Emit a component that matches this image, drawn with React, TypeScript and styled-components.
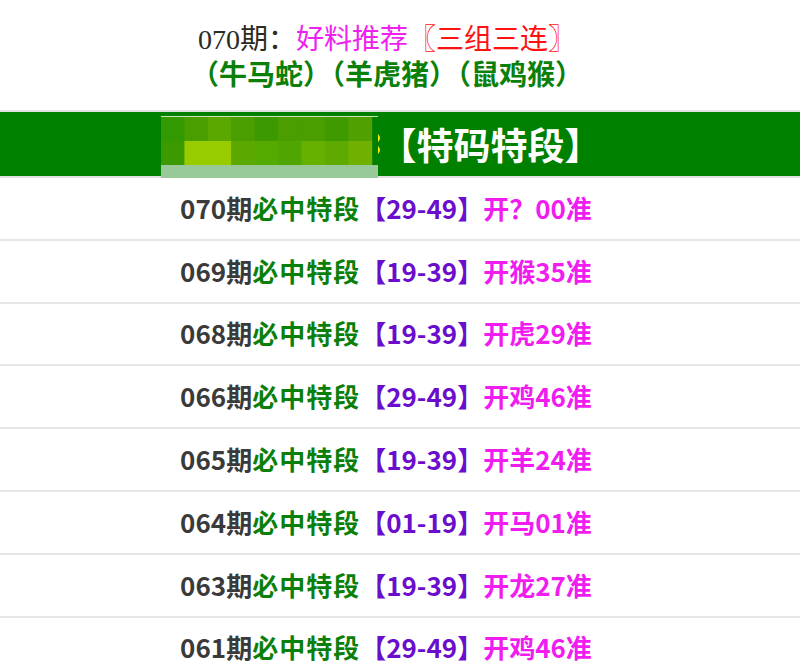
import React from "react";
import styled, { createGlobalStyle } from "styled-components";

const Global = createGlobalStyle`
  html, body { margin: 0; padding: 0; background: #fff; }
  body { font-family: "Noto Sans CJK SC", sans-serif; }
`;

const Page = styled.div`
  width: 800px;
  background: #fff;
`;

const Header = styled.div`
  height: 110px;
  display: flex;
  flex-direction: column;
  align-items: center;
  padding-top: 23px;
  padding-right: 26px;
  box-sizing: border-box;
`;

const TitleLine = styled.div`
  font-family: "Liberation Serif", "Noto Sans CJK SC", serif;
  font-size: 28px;
  line-height: 34px;
  color: #2b2b1f;
  white-space: nowrap;
`;

const Span = styled.span<{ $c: string }>`
  color: ${(p) => p.$c};
`;

const ZodiacLine = styled.div`
  font-family: "Noto Sans CJK SC", sans-serif;
  font-weight: 700;
  font-size: 28px;
  line-height: 33px;
  color: #0a800a;
  white-space: nowrap;
`;

const Banner = styled.div`
  height: 64px;
  background: #008000;
  border-top: 2px solid #e2e2e2;
  border-bottom: 2px solid #e2e2e2;
  display: flex;
  align-items: center;
  justify-content: center;
  padding-right: 38px;
`;

const Mosaic = styled.svg`
  display: block;
  align-self: flex-end;
  margin-bottom: -2px;
  flex-shrink: 0;
`;

const BannerText = styled.div`
  font-family: "Noto Sans CJK SC", sans-serif;
  font-weight: 700;
  font-size: 37px;
  color: #fff;
  white-space: nowrap;
`;

const Row = styled.div`
  height: 58.8px;
  padding-bottom: 2px;
  border-bottom: 2px solid #e6e6e6;
  display: flex;
  align-items: center;
  justify-content: center;
  font-family: "Noto Sans CJK SC", sans-serif;
  font-weight: 700;
  font-size: 26px;
  white-space: nowrap;
  padding-right: 28px;
`;

const Issue = styled.span`
  color: #3a3a3a;
`;

const Must = styled.span`
  color: #0a800a;
  letter-spacing: 1px;
`;

const Range = styled.span`
  color: #6a0dcc;
`;

const Result = styled.span`
  color: #f01cf0;
`;

const row1 = ["#339900", "#4a9e00", "#5aa800", "#4a9e00", "#3d9900", "#4a9e00", "#4a9e00", "#3f9a00", "#4fa000"];
const row2 = ["#3d9900", "#99cc00", "#99cc00", "#5aa800", "#55aa00", "#50a500", "#66b000", "#5eaa00", "#70b000"];

const MosaicImg = () => (
  <Mosaic width="219" height="62" viewBox="0 0 219 62">
    <rect x="0" y="0" width="217" height="1" fill="#c8e6b4" />
    {row1.map((c, i) => (
      <rect key={"a" + i} x={i * 23.4} y={1} width={24} height={24} fill={c} />
    ))}
    {row2.map((c, i) => (
      <rect key={"b" + i} x={i * 23.4} y={25} width={24} height={24} fill={c} />
    ))}
    <rect x="0" y="49" width="217" height="13" fill="#99c999" />
    <path d="M217 18 q4 4 0 8 z" fill="#ffee00" />
    <path d="M217 30 q4 4 0 8 z" fill="#ffee00" />
  </Mosaic>
);

const rows = [
  ["070", "29-49", "开？00准"],
  ["069", "19-39", "开猴35准"],
  ["068", "19-39", "开虎29准"],
  ["066", "29-49", "开鸡46准"],
  ["065", "19-39", "开羊24准"],
  ["064", "01-19", "开马01准"],
  ["063", "19-39", "开龙27准"],
  ["061", "29-49", "开鸡46准"],
];

export default function App() {
  return (
    <Page>
      <Global />
      <Header>
        <TitleLine>
          070期：<Span $c="#ee22ee">好料推荐</Span>
          <Span $c="#ff1111">〖三组三连〗</Span>
        </TitleLine>
        <ZodiacLine>（牛马蛇）（羊虎猪）（鼠鸡猴）</ZodiacLine>
      </Header>
      <Banner>
        <MosaicImg />
        <BannerText>【特码特段】</BannerText>
      </Banner>
      {rows.map(([n, r, res]) => (
        <Row key={n}>
          <Issue>{n}期</Issue>
          <Must>必中特段</Must>
          <Range>【{r}】</Range>
          <Result>{res}</Result>
        </Row>
      ))}
    </Page>
  );
}
